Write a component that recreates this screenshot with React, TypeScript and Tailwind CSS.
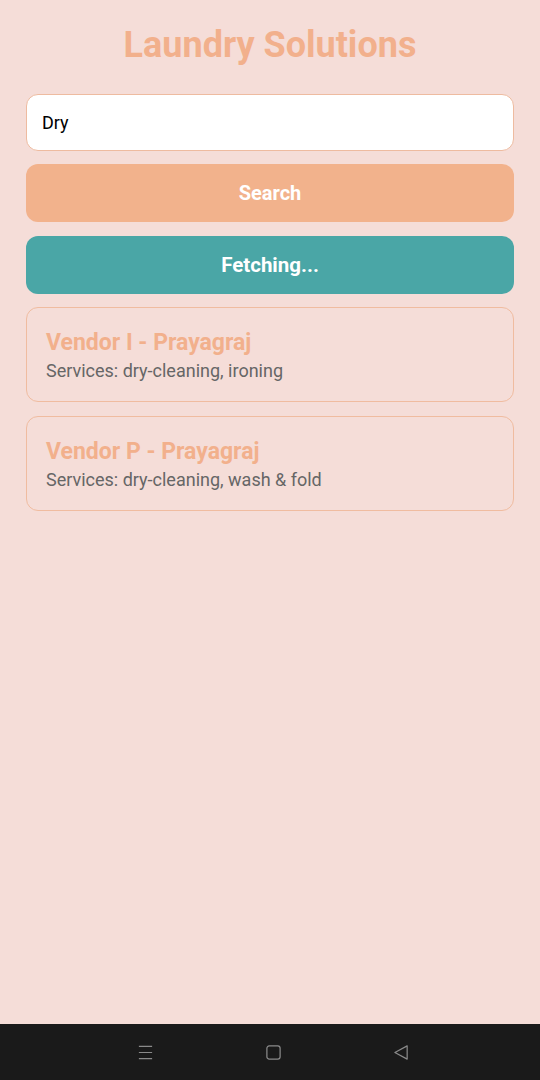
import React from "react";

export default function App() {
  return (
    <div className="w-[540px] h-[1080px] flex flex-col bg-[#f5ddd8] font-['Roboto',sans-serif]">
      <div className="flex-1 flex flex-col px-[26px]">
        <h1 className="text-center text-[36px] font-bold text-[#f2b08c] mt-[22px] leading-[46px]">Laundry Solutions</h1>
        <div className="mt-[26px] h-[57px] rounded-[12px] bg-white border border-[#eebba0] flex items-center px-[15px] text-[18px] text-black">Dry</div>
        <div className="mt-[13px] h-[58px] rounded-[12px] bg-[#f2b28c] flex items-center justify-center text-white font-bold text-[20px]">Search</div>
        <div className="mt-[14px] h-[58px] rounded-[12px] bg-[#4aa6a6] flex items-center justify-center text-white font-bold text-[20.5px]">Fetching...</div>
        <div className="mt-[13px] h-[95px] rounded-[12px] border border-[#f0bca0] flex flex-col px-[19px] pt-[21px]">
          <div className="text-[23px] font-bold text-[#f2b08c] leading-[28px]">Vendor I - Prayagraj</div>
          <div className="mt-[2px] text-[18px] text-[#666666] leading-[24px]">Services: dry-cleaning, ironing</div>
        </div>
        <div className="mt-[14px] h-[95px] rounded-[12px] border border-[#f0bca0] flex flex-col px-[19px] pt-[21px]">
          <div className="text-[23px] font-bold text-[#f2b08c] leading-[28px]">Vendor P - Prayagraj</div>
          <div className="mt-[2px] text-[18px] text-[#666666] leading-[24px]">Services: dry-cleaning, wash &amp; fold</div>
        </div>
      </div>
      <div className="h-[56px] bg-[#1a1a1a] flex items-center justify-center gap-[111px] pl-[6px] text-[#8a8a8a]">
        <svg width="17" height="17" viewBox="0 0 18 18" fill="none" stroke="currentColor" strokeWidth="1.3">
          <path d="M2 2.5h14M2 9h14M2 15.5h14" />
        </svg>
        <svg width="17" height="17" viewBox="0 0 18 18" fill="none" stroke="currentColor" strokeWidth="1.3">
          <rect x="2" y="2" width="14" height="14" rx="2.5" />
        </svg>
        <svg width="17" height="17" viewBox="0 0 18 18" fill="none" stroke="currentColor" strokeWidth="1.3">
          <path d="M15 2v14L2 9z" strokeLinejoin="round" />
        </svg>
      </div>
    </div>
  );
}
